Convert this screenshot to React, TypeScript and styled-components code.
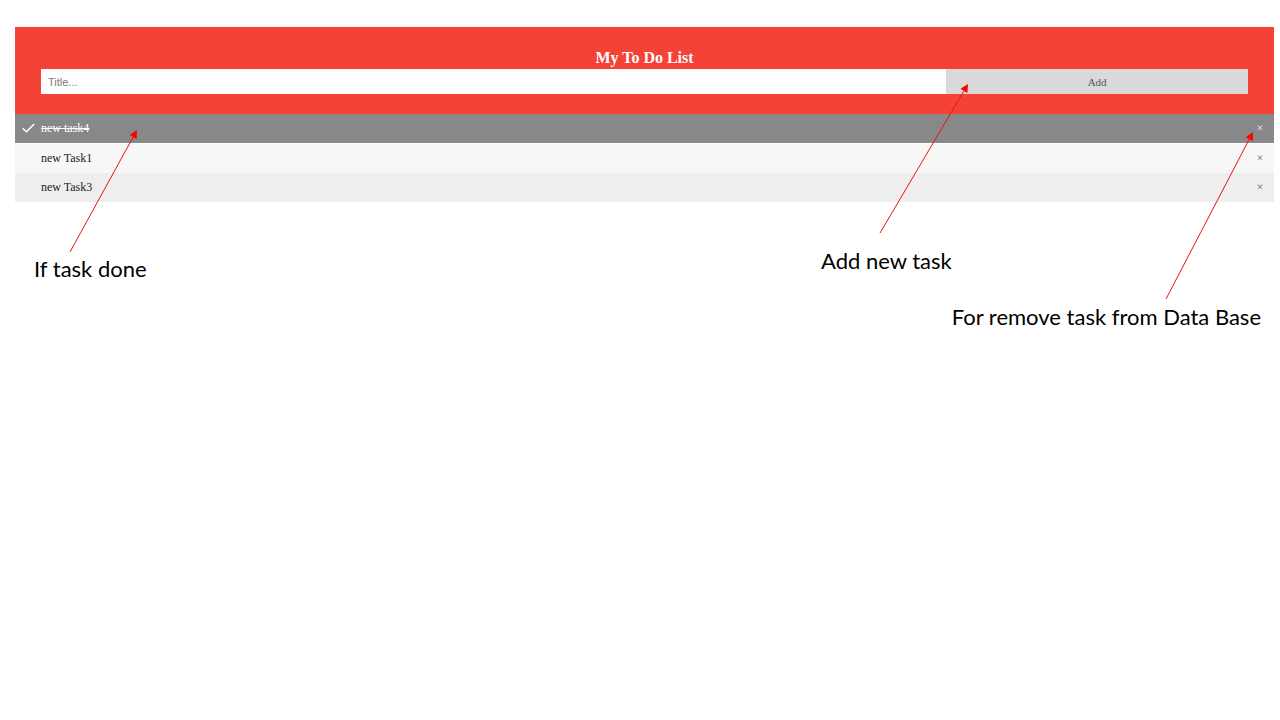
import React, { useState } from "react";
import styled, { createGlobalStyle } from "styled-components";

const GlobalStyle = createGlobalStyle`
  * { box-sizing: border-box; }
  body {
    margin: 0;
    background: #fff;
    font-family: "Liberation Serif", "Times New Roman", serif;
  }
`;

const Page = styled.div`
  position: relative;
  min-height: 100vh;
  padding: 27px 6px 0 15px;
  overflow: hidden;
`;

const Header = styled.header`
  background: #f44336;
  padding: 20px 26px;
  color: #fff;
  text-align: center;
`;

const Title = styled.h1`
  margin: 0;
  font-size: 16px;
  line-height: 22px;
`;

const Form = styled.form`
  display: grid;
  grid-template-columns: 3fr 1fr;
  height: 25px;
`;

const TitleInput = styled.input`
  width: 100%;
  min-width: 0;
  border: 0;
  border-radius: 0;
  padding: 0 7px;
  background: #fff;
  font: 11px "Liberation Sans", Arial, sans-serif;
  &::placeholder { color: #7c7c7c; opacity: 1; }
`;

const AddButton = styled.button`
  border: 0;
  padding: 0;
  background: #d9d9d9;
  color: #555;
  font: 11px "Liberation Serif", "Times New Roman", serif;
  cursor: pointer;
`;

const List = styled.ul`
  margin: 0;
  padding: 0;
  list-style: none;
`;

const Row = styled.li<{ $done: boolean }>`
  display: flex;
  align-items: center;
  height: 29px;
  margin-bottom: ${(p) => (p.$done ? "1px" : "0")};
  background: ${(p) => (p.$done ? "#888" : "#f7f7f7")};
  color: ${(p) => (p.$done ? "#fff" : "#222")};
  &:nth-child(odd) { background: ${(p) => (p.$done ? "#888" : "#eee")}; }
`;

const Mark = styled.span`
  display: flex;
  width: 26px;
  padding-left: 7px;
`;

const TaskName = styled.span<{ $done: boolean }>`
  flex: 1;
  padding-bottom: 2px;
  font-size: 12px;
  line-height: 16px;
  text-decoration: ${(p) => (p.$done ? "line-through" : "none")};
`;

const RemoveButton = styled.button<{ $done: boolean }>`
  width: 28px;
  height: 29px;
  border: 0;
  padding: 0;
  background: none;
  color: ${(p) => (p.$done ? "#eee" : "#666")};
  font: 12px "Liberation Serif", "Times New Roman", serif;
  cursor: pointer;
`;

const Callout = styled.div<{ $top: number; $left?: number; $right?: number }>`
  position: absolute;
  top: ${(p) => p.$top}px;
  left: ${(p) => (p.$left === undefined ? "auto" : `${p.$left}px`)};
  right: ${(p) => (p.$right === undefined ? "auto" : `${p.$right}px`)};
  display: flex;
  flex-direction: column;
  pointer-events: none;
`;

const ArrowBox = styled.div<{ $indent: number; $gap: number }>`
  display: flex;
  padding-left: ${(p) => p.$indent}px;
  padding-bottom: ${(p) => p.$gap}px;
`;

const CalloutText = styled.span`
  color: #000;
  font: 22px/28px Lato, Carlito, Calibri, sans-serif;
  white-space: nowrap;
`;

function Arrow({ width, height }: { width: number; height: number }) {
  const length = Math.hypot(width, height);
  const ux = width / length;
  const uy = -height / length;
  const bx = width - ux * 8;
  const by = -uy * 8;
  const head = `${width},0 ${bx - uy * 4},${by + ux * 4} ${bx + uy * 4},${by - ux * 4}`;
  return (
    <svg width={width} height={height} overflow="visible" aria-hidden="true">
      <line x1="0" y1={height} x2={bx} y2={by} stroke="#ef1010" strokeWidth="1" />
      <polygon points={head} fill="#f00" />
    </svg>
  );
}

const initialTasks = [
  { name: "new task4", done: true },
  { name: "new Task1", done: false },
  { name: "new Task3", done: false },
];

export default function App() {
  const [tasks, setTasks] = useState(initialTasks);
  const [title, setTitle] = useState("");

  const addTask = (event: React.FormEvent) => {
    event.preventDefault();
    if (!title.trim()) return;
    setTasks([...tasks, { name: title, done: false }]);
    setTitle("");
  };

  return (
    <>
      <GlobalStyle />
      <Page>
        <Header>
          <Title>My To Do List</Title>
          <Form onSubmit={addTask}>
            <TitleInput
              aria-label="Title"
              placeholder="Title..."
              value={title}
              onChange={(e) => setTitle(e.target.value)}
            />
            <AddButton type="submit">Add</AddButton>
          </Form>
        </Header>
        <List>
          {tasks.map((task, index) => (
            <Row key={index} $done={task.done}>
              <Mark>
                {task.done && (
                  <svg width="13" height="11" viewBox="0 0 13 11" fill="none" aria-hidden="true">
                    <path d="M0.6 5.2 4.4 8.8 12.2 1" stroke="#fff" strokeWidth="1.5" />
                  </svg>
                )}
              </Mark>
              <TaskName $done={task.done}>{task.name}</TaskName>
              <RemoveButton
                type="button"
                $done={task.done}
                aria-label={`Remove ${task.name}`}
                onClick={() => setTasks(tasks.filter((_, i) => i !== index))}
              >
                ×
              </RemoveButton>
            </Row>
          ))}
        </List>

        <Callout $top={130} $left={34}>
          <ArrowBox $indent={36} $gap={3}>
            <Arrow width={67} height={122} />
          </ArrowBox>
          <CalloutText>If task done</CalloutText>
        </Callout>
        <Callout $top={84} $right={312}>
          <ArrowBox $indent={59} $gap={14}>
            <Arrow width={88} height={149} />
          </ArrowBox>
          <CalloutText>Add new task</CalloutText>
        </Callout>
        <Callout $top={132} $right={19}>
          <ArrowBox $indent={214} $gap={4}>
            <Arrow width={87} height={167} />
          </ArrowBox>
          <CalloutText>For remove task from Data Base</CalloutText>
        </Callout>
      </Page>
    </>
  );
}
